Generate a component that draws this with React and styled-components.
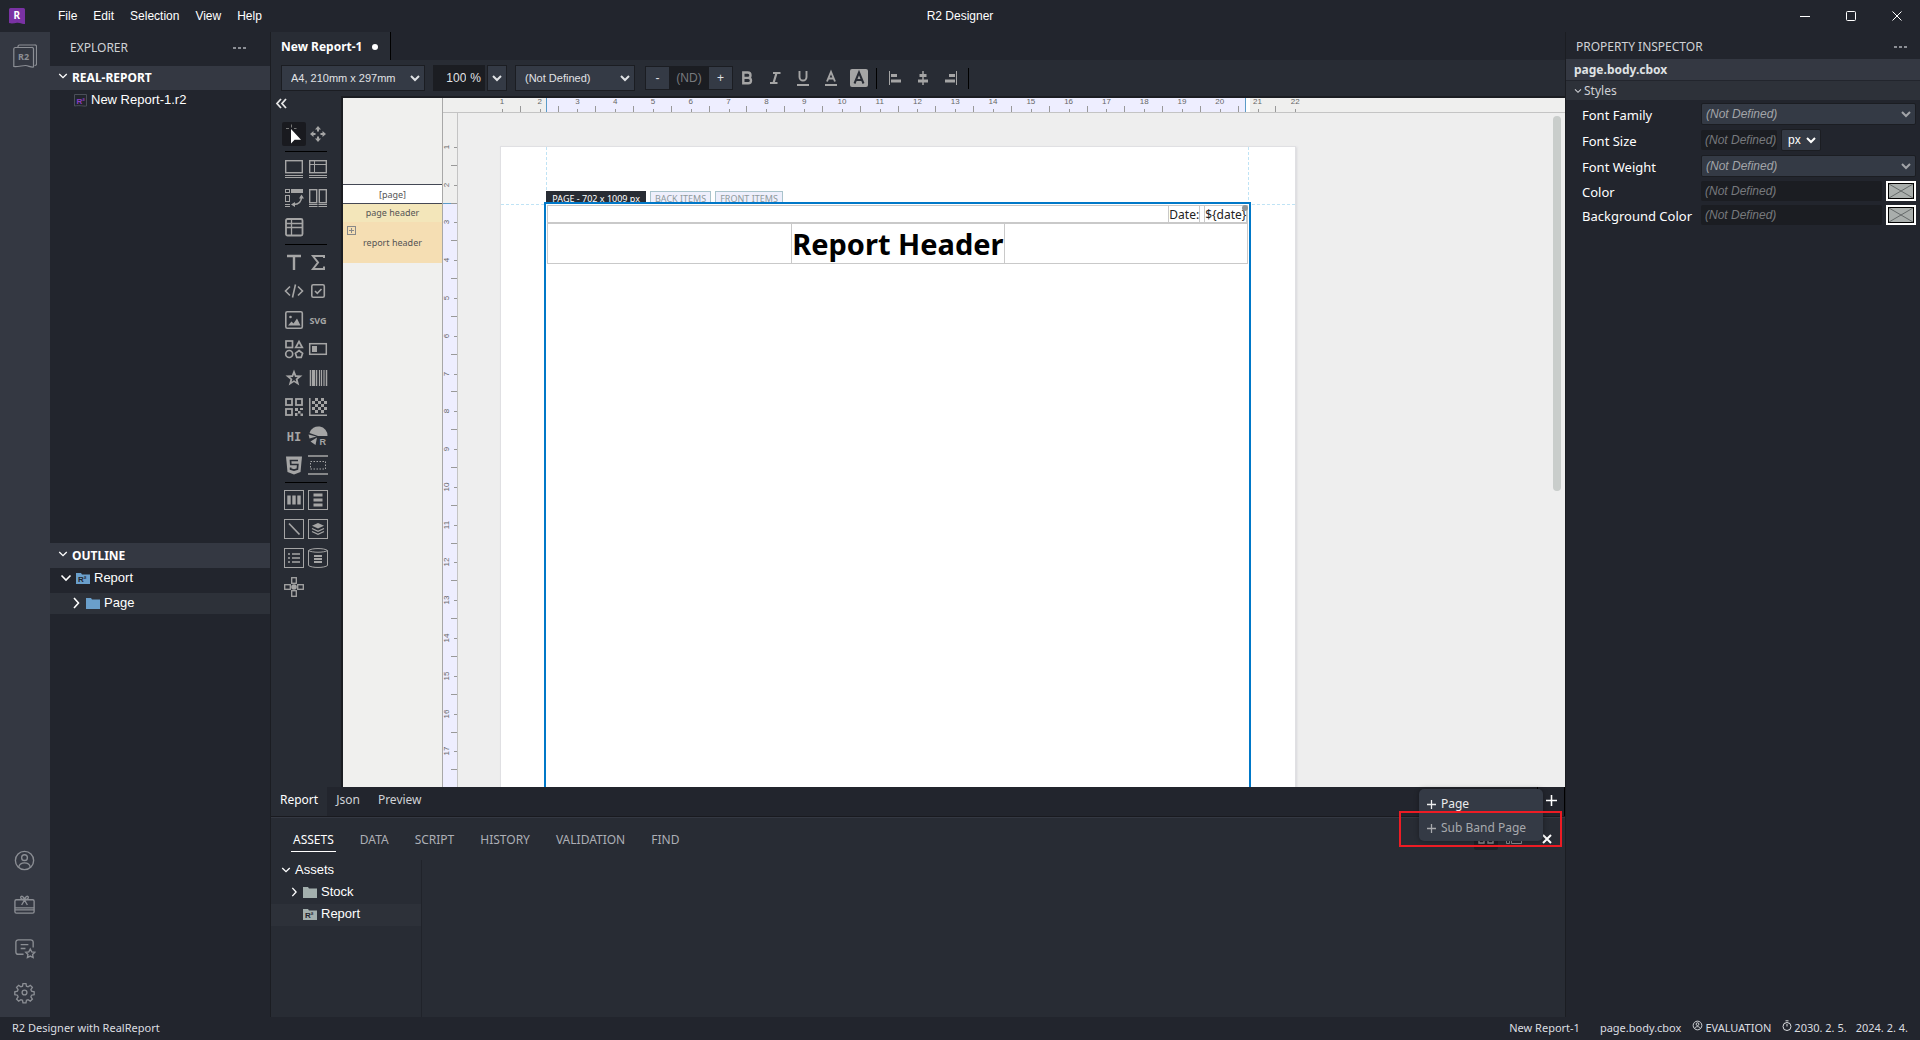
import React from 'react';
import styled, { createGlobalStyle, css } from 'styled-components';

const ui = '"Noto Sans", "Open Sans", sans-serif';
const sans = '"Liberation Sans", Arial, sans-serif';

const c = {
  base: '#22252d',
  panel: '#282c34',
  rail: '#343842',
  field: '#343a45',
  dark: '#1b1d22',
  hover: '#2d3139',
  icon: '#a5a5a5',
  text: '#ffffff',
  soft: '#d0d2d6',
  line: '#c9c9c9',
  blue: '#0078c8',
};

const GlobalStyle = createGlobalStyle`
  *, *::before, *::after { box-sizing: border-box; }
  body { margin: 0; background: ${c.base}; color: ${c.text}; font: 13px/20px ${sans}; }
  button, input, select { font: inherit; color: inherit; margin: 0; padding: 0; border: 0; background: none; border-radius: 0; }
  h1, h2, h3, p, ul { margin: 0; padding: 0; font: inherit; list-style: none; }
  svg { display: block; flex: none; }
`;

const Shell = styled.div`
  height: 100vh;
  display: flex;
  flex-direction: column;
  overflow: hidden;
`;

const TitleBar = styled.header`
  display: grid;
  grid-template-columns: 1fr auto 1fr;
  align-items: center;
  height: 32px;
  flex: none;
  font-size: 12px;
`;
const TitleLeft = styled.div`
  display: flex;
  align-items: center;
  gap: 33px;
  padding-left: 9px;
`;
const Menu = styled.nav`
  display: flex;
  gap: 16px;
`;
const MenuButton = styled.button`
  height: 20px;
`;
const WindowButtons = styled.div`
  display: flex;
  justify-content: flex-end;
`;
const WindowButton = styled.button`
  width: 46px;
  height: 32px;
  display: grid;
  place-items: center;
`;

const Main = styled.div`
  flex: 1;
  display: flex;
  min-height: 0;
`;

const Rail = styled.nav`
  width: 50px;
  flex: none;
  background: ${c.rail};
  display: flex;
  flex-direction: column;
  align-items: center;
  gap: 20px;
  padding: 12px 0 12px;
  color: #8b8e94;
`;
const RailButton = styled.button`
  width: 24px;
  height: 24px;
  ${(p) => p.$push && css`margin-top: auto;`}
`;

const Explorer = styled.aside`
  width: 220px;
  flex: none;
  display: flex;
  flex-direction: column;
`;
const PanelHeader = styled.div`
  display: flex;
  justify-content: space-between;
  align-items: center;
  height: ${(p) => p.$h}px;
  padding: ${(p) => p.$pad};
  font: 12px/16px ${ui};
  color: ${c.soft};
  flex: none;
`;
const Dots = styled.button`
  display: flex;
  gap: 2px;
  height: 16px;
  align-items: center;
  &::before, &::after, span { content: ''; width: 3px; height: 2px; background: #8b8e94; }
`;
const Section = styled.button`
  display: flex;
  align-items: center;
  gap: 4px;
  height: ${(p) => p.$h || 24}px;
  padding: 0 8px;
  background: ${c.rail};
  font: bold 12px/16px ${ui};
  flex: none;
  svg { margin-bottom: 4px; }
`;
const ExplorerTree = styled.ul`
  flex: 1;
`;
const OutlineTree = styled.ul`
  flex: none;
  height: 449px;
`;
const TreeRow = styled.li`
  display: flex;
  align-items: center;
  gap: 4px;
  height: ${(p) => p.$h || 22}px;
  padding: 0 0 ${(p) => p.$pb || 2}px ${(p) => p.$indent}px;
  background: ${(p) => (p.$on ? c.hover : 'none')};
  font: 13px/18px ${sans};
`;

const Editor = styled.main`
  flex: 1;
  min-width: 0;
  display: flex;
  flex-direction: column;
  border-left: 1px solid #1b1d22;
  background: ${c.panel};
`;
const FileTabs = styled.div`
  height: 28px;
  flex: none;
  background: ${c.base};
  display: flex;
`;
const FileTab = styled.button`
  display: flex;
  align-items: center;
  gap: 10px;
  padding: 2px 12px 0 10px;
  background: ${c.panel};
  border-right: 1px solid #000;
  font: bold 12px/16px ${ui};
  &::after { content: ''; width: 6px; height: 6px; border-radius: 50%; background: #fff; }
`;
const Toolbar = styled.div`
  height: 36px;
  flex: none;
  display: flex;
  align-items: center;
  padding: 0 10px 0;
  font: 11px/14px ${sans};
  color: #e0e2e5;
`;
const SelectBox = styled.div`
  display: grid;
  align-items: center;
  width: ${(p) => (p.$w ? `${p.$w}px` : 'auto')};
  height: ${(p) => p.$h || 26}px;
  margin-right: ${(p) => p.$mr || 0}px;
  background: ${c.field};
  border: 1px solid ${c.dark};
  border-radius: ${(p) => p.$r || 0}px;
  color: ${(p) => p.$color || 'inherit'};
  select, svg { grid-area: 1 / 1; }
  svg { justify-self: end; margin-right: 4px; pointer-events: none; }
`;
const NativeSelect = styled.select`
  appearance: none;
  width: 100%;
  height: 100%;
  padding-left: ${(p) => p.$pl}px;
  font-style: ${(p) => (p.$italic ? 'italic' : 'normal')};
  color: ${(p) => (p.$italic ? '#a2a4a8' : 'inherit')};
  outline: none;
`;
const ZoomField = styled.label`
  display: flex;
  align-items: center;
  justify-content: flex-end;
  gap: 4px;
  width: 52px;
  height: 26px;
  margin-right: 2px;
  padding-right: 4px;
  background: ${c.dark};
  font-size: 12px;
  input { width: 20px; }
`;
const Stepper = styled.div`
  display: flex;
  height: 24px;
  border: 1px solid ${c.dark};
  background: ${c.dark};
  font-size: 12px;
  input { width: 40px; text-align: center; color: #77797d; }
  input::placeholder { color: #77797d; opacity: 1; }
`;
const StepButton = styled.button`
  width: 23px;
  background: ${c.field};
`;
const ToolButton = styled.button`
  width: 20px;
  height: 20px;
  margin: 0 4px;
  color: ${c.icon};
  display: grid;
  place-items: center;
`;
const ToolDivider = styled.span`
  width: 1px;
  height: 21px;
  background: #000;
  margin: 0 4px 0 3px;
`;

const Body = styled.div`
  flex: 1;
  display: flex;
  min-height: 0;
`;
const Palette = styled.div`
  width: 70px;
  flex: none;
  display: flex;
  flex-direction: column;
  padding-left: 11px;
  color: ${c.icon};
`;
const Collapse = styled.button`
  width: 12px;
  height: 14px;
  margin: 0 0 12px -7px;
  color: #e6e6e6;
`;
const PaletteGroup = styled.div`
  display: grid;
  grid-template-columns: 24px 24px;
  row-gap: 5px;
  & + & { position: relative; margin-top: 11px; }
  & + &::before { content: ''; position: absolute; left: 3px; top: -6px; width: 42px; height: 1px; background: #000; }
`;
const PaletteButton = styled.button`
  width: 24px;
  height: 24px;
  border-radius: 2px;
  background: ${(p) => (p.$on ? '#191a1f' : 'none')};
  color: ${(p) => (p.$on ? '#fff' : 'inherit')};
`;

const Design = styled.div`
  flex: 1;
  min-width: 0;
  display: flex;
  border-top: 2px solid #1b1d22;
  border-left: 2px solid #1b1d22;
  background: #f0f0ee;
  color: #555;
`;
const Bands = styled.div`
  width: 100px;
  flex: none;
  padding-top: 86px;
  border-right: 1px solid #a8a8a8;
  font: 9px/14px ${ui};
  text-align: center;
`;
const Band = styled.div`
  position: relative;
  display: grid;
  place-items: center;
  height: ${(p) => p.$h}px;
  background: ${(p) => p.$bg};
  ${(p) => p.$lined && css`border: solid #444854; border-width: 1px 0; padding-top: 2px;`}
`;
const ExpandBand = styled.button`
  position: absolute;
  left: 4px;
  top: 4px;
  width: 9px;
  height: 9px;
`;
const Sheet = styled.div`
  flex: 1;
  min-width: 0;
  display: grid;
  grid-template: 15px minmax(0, 1fr) / 15px minmax(0, 1fr);
`;
const HRuler = styled.div`
  grid-column: 1 / -1;
  display: flex;
  overflow: hidden;
  padding-left: 40px;
  border-bottom: 1px solid #c4c4c4;
  background: linear-gradient(90deg, #efefee 103px, #5b9bc8 103px 104px, #eeeeff 104px 802px, #5b9bc8 802px 803px, #fff 803px 807px, #efefee 807px);
`;
const VRuler = styled.div`
  display: flex;
  flex-direction: column;
  overflow: hidden;
  padding-top: 15px;
  border-right: 1px solid #c4c4c4;
  background: linear-gradient(180deg, #efefee 90px, #5b9bc8 90px 91px, #eeeeff 91px);
`;
const tick = css`
  content: '';
  position: absolute;
  background: #999;
`;
const HMark = styled.span`
  position: relative;
  flex: none;
  width: 1cm;
  text-align: center;
  font: 8px/8px ${sans};
  color: #666;
  &::before { ${tick} left: 50%; bottom: 0; width: 1px; height: 3px; }
  &::after { ${tick} right: 0; bottom: 0; width: 1px; height: 6px; }
  &:last-child::after { display: none; }
`;
const VMark = styled.span`
  position: relative;
  flex: none;
  height: 1cm;
  display: flex;
  align-items: center;
  font: 8px/8px ${sans};
  color: #666;
  span { width: 8px; display: flex; justify-content: center; transform: rotate(-90deg); }
  &::before { ${tick} top: 50%; right: 0; height: 1px; width: 3px; }
  &::after { ${tick} bottom: 0; right: 0; height: 1px; width: 6px; }
`;
const Work = styled.div`
  position: relative;
  overflow: hidden;
  background: #eeeeee;
`;
const Scrollbar = styled.div`
  position: absolute;
  right: 4px;
  top: 3px;
  width: 8px;
  height: 375px;
  border-radius: 4px;
  background: #c9cdcb;
`;
const Paper = styled.div`
  position: relative;
  width: 210mm;
  height: 297mm;
  margin: 34px 0 0 43px;
  padding: 15mm 12mm;
  background: #fff;
  box-shadow: 0 0 0 1px #e0e0e3, 1px 1px 2px 1px #d8d8dc;
`;
const Guide = styled.i`
  position: absolute;
  border: 0 dashed #bfe3f5;
  ${(p) =>
    p.$row
      ? css`left: 0; right: 0; top: 15mm; border-top-width: 1px;`
      : css`top: 0; bottom: 0; ${p.$side}: 12mm; border-left-width: 1px;`}
`;
const PageBody = styled.section`
  position: relative;
  height: 100%;
  padding: 1px;
  outline: 2px solid ${c.blue};
  background: #fff;
`;
const Tags = styled.div`
  position: absolute;
  left: 12mm;
  top: 44px;
  display: flex;
  gap: 4px;
`;
const Tag = styled.span`
  height: 16px;
  padding: 0 ${(p) => (p.$on ? 5 : 4)}px;
  font: 9px/14px ${ui};
  white-space: nowrap;
  border: 1px solid ${(p) => (p.$on ? c.panel : '#a9c3cc')};
  background: ${(p) => (p.$on ? c.panel : '#eeeffc')};
  color: ${(p) => (p.$on ? '#fff' : '#8f9a9c')};
`;
const PageHeaderBand = styled.div`
  position: relative;
  display: flex;
  justify-content: flex-end;
  gap: 4px;
  height: 18px;
  border: 1px solid ${c.line};
  font: 12px/17px ${ui};
  color: #222;
  span { border: solid ${c.line}; border-width: 0 1px; }
`;
const Handle = styled.i`
  position: absolute;
  right: -1px;
  top: -1px;
  width: 6px;
  height: 6px;
  border-radius: 50%;
  background: #8f9496;
`;
const ReportHeaderBand = styled.div`
  display: flex;
  justify-content: center;
  height: 41px;
  border: 1px solid ${c.line};
  h1 { border: solid ${c.line}; border-width: 0 1px; font: bold 29px/40px ${ui}; color: #000; }
`;

const ViewTabs = styled.div`
  position: relative;
  height: 30px;
  flex: none;
  display: flex;
  background: ${c.base};
  border-bottom: 1px solid #191a1f;
  font: 12px/16px ${ui};
`;
const ViewTab = styled.button`
  padding: 0 9px 4px;
  background: ${(p) => (p.$on ? c.panel : 'none')};
  color: ${(p) => (p.$on ? '#fff' : c.soft)};
`;
const AddPage = styled.button`
  margin-left: auto;
  width: 28px;
  display: grid;
  place-items: center;
  padding-bottom: 2px;
  border: solid #000;
  border-width: 0 1px;
`;
const AddMenu = styled.div`
  position: absolute;
  z-index: 2;
  right: 22px;
  top: 2px;
  width: 124px;
  height: 52px;
  padding: 3px 0 0;
  border-radius: 5px;
  background: ${c.field};
  box-shadow: 0 0 5px rgba(0, 0, 0, 0.35);
`;
const AddItem = styled.button`
  display: flex;
  align-items: center;
  gap: 5px;
  width: 100%;
  height: 24px;
  padding-left: 8px;
  color: ${(p) => (p.$dim ? '#a7a9ad' : '#eceded')};
`;
const Highlight = styled.div`
  position: absolute;
  z-index: 3;
  right: 3px;
  top: 24px;
  width: 163px;
  height: 36px;
  border: 2px solid #ed1c24;
`;
const Dock = styled.section`
  height: 200px;
  flex: none;
  display: flex;
  flex-direction: column;
  border-top: 1px solid #343842;
`;
const DockTabs = styled.div`
  display: flex;
  align-items: flex-start;
  height: 42px;
  flex: none;
  padding: 10px 1px 0 20px;
  gap: 22px;
  font: 12px/20px ${ui};
`;
const DockTab = styled.button`
  height: 24px;
  padding: 0 2px;
  border-bottom: 1px solid ${(p) => (p.$on ? '#fff' : 'transparent')};
  color: ${(p) => (p.$on ? '#fff' : '#adafb6')};
`;
const DockTools = styled.div`
  margin-left: auto;
  display: flex;
  align-items: center;
  gap: 8px;
  color: #85888d;
`;
const DockTool = styled.button`
  width: ${(p) => p.$w}px;
  height: 22px;
  display: grid;
  place-items: center;
  border-radius: 2px;
  background: ${(p) => (p.$on ? '#1e2026' : 'none')};
  color: ${(p) => (p.$bright ? '#fff' : 'inherit')};
`;
const AssetTree = styled.ul`
  width: 151px;
  flex: 1;
  border-right: 1px solid #20232a;
`;

const Inspector = styled.aside`
  width: 355px;
  flex: none;
  border-left: 1px solid #1b1d22;
`;
const Target = styled.h2`
  height: 21px;
  padding-left: 8px;
  background: ${c.rail};
  font: bold 12px/21px ${ui};
  color: #dfe1e4;
`;
const StyleSection = styled.button`
  display: flex;
  align-items: center;
  gap: 2px;
  width: 100%;
  height: 20px;
  margin-bottom: 3px;
  padding-left: 8px;
  background: ${c.hover};
  border-top: 1px solid #22252d;
  font: 12px/18px ${ui};
  color: ${c.soft};
`;
const Fields = styled.div`
  display: grid;
  grid-template-columns: 119px minmax(0, 1fr);
  row-gap: 4px;
  padding: 0 4px 0 16px;
  align-items: center;
  font: italic 12px/16px ${sans};
`;
const FieldLabel = styled.label`
  font: 13px/18px ${ui};
  padding-top: 2px;
`;
const FieldLine = styled.div`
  display: flex;
  align-items: center;
  gap: 4px;
  min-height: ${(p) => p.$h}px;
  & > ${SelectBox} { flex: ${(p) => (p.$fill ? 1 : 'none')}; }
`;
const TextField = styled.input`
  width: ${(p) => (p.$w ? `${p.$w}px` : 'auto')};
  flex: ${(p) => (p.$w ? 'none' : 1)};
  min-width: 0;
  height: 20px;
  padding-left: 4px;
  background: ${c.dark};
  border-radius: 2px;
  font-style: italic;
  &::placeholder { color: #77797d; opacity: 1; }
`;
const Swatch = styled.button`
  width: 30px;
  height: 20px;
  border: 2px solid #fff;
`;

const StatusBar = styled.footer`
  height: 23px;
  flex: none;
  display: flex;
  align-items: center;
  padding: 0 12px 2px;
  font: 11px/16px ${ui};
  color: #dcdee1;
`;
const StatusItem = styled.span`
  display: flex;
  gap: 2px;
  margin-left: ${(p) => p.$ml || 0}px;
  white-space: pre;
`;
const Spacer = styled.span`
  flex: 1;
`;

const Ic = ({ w = 24, h = w, vb = `0 0 ${w} ${h}`, children, sw = 1, fill = 'none' }) => (
  <svg width={w} height={h} viewBox={vb} fill={fill} stroke="currentColor" strokeWidth={sw} aria-hidden="true">
    {children}
  </svg>
);

const Chevron = ({ open = true, w = 12, sw = 1.6 }) => (
  <Ic w={w} vb="0 0 12 12" sw={sw}>
    <path d={open ? 'M1.5 3.5 6 8l4.5-4.5' : 'M4 1l4.5 5L4 11'} />
  </Ic>
);
const Caret = () => (
  <Ic w={10} sw={2}><path d="M1 3l4 4 4-4" /></Ic>
);
const Plus = ({ w = 9, sw = 1.4 }) => (
  <Ic w={w} vb="0 0 10 10" sw={sw}><path d="M5 0v10M0 5h10" /></Ic>
);

const Folder = ({ color, mark }) => (
  <svg width="14" height="12" viewBox="0 0 14 12" aria-hidden="true">
    <path d="M0 1h5l1 1.5h8V12H0z" fill={color} />
    {mark && <text x="2" y="10" fontFamily={sans} fontSize="8" fontWeight="bold" fill="#22252d">R²</text>}
  </svg>
);

const Logo = () => (
  <svg width="16" height="16" viewBox="0 0 16 16" aria-hidden="true">
    <path d="M1.5 0h13A1.5 1.5 0 0 1 16 1.500V16c-3 .3-5-1.600-8-1.200S3 16 0 15V1.500A1.500 1.500 0 0 1 1.500 0z" fill="#7a32a4" />
    <text x="4.500" y="11" fontFamily={ui} fontSize="10" fontWeight="bold" fill="#fff">R</text>
  </svg>
);

const icons = {
  select: (
    <>
      <path d="M9 7v14.500l3.600-3.800H19z" fill="currentColor" stroke="none" />
      <path d="M9.500 2.500v3M4 6.500h3M12 6.500h2.500" stroke="#777" />
    </>
  ),
  move: (
    <g fill="currentColor" stroke="none">
      <path d="M12 4l3 3.500H9zM12 20l3-3.500H9zM4 12l3.500-3v6zM20 12l-3.500-3v6z" />
      <path d="M11 7h2v2.500h-2zM11 14.500h2V17h-2zM7 11h2.500v2H7zM14.500 11H17v2h-2.500z" />
    </g>
  ),
  band: <><rect x="3.700" y="3.700" width="16.600" height="12" strokeWidth="1.400" /><path d="M3 18.500h18M3 20.500h18" /></>,
  tableBand: <><rect x="3.700" y="3.700" width="16.600" height="12" strokeWidth="1.400" /><path d="M3 7.500h18M8.500 4v12M3 18.500h18M3 20.500h18" /></>,
  crosstab: (
    <>
      <rect x="3.500" y="3.500" width="4" height="3" /><path d="M9 5h12" strokeWidth="4" />
      <rect x="3.500" y="9.500" width="4" height="6" /><path d="M3 18.500h5M3 20.500h5" />
      <path d="M19.500 10.500c0 5-2 8-8 8" strokeWidth="1.500" /><path d="M17 12.500l2.500-4 2.500 4zM13 16l-4 2.500 4 2.500z" fill="currentColor" stroke="none" />
    </>
  ),
  columns: <><rect x="3.700" y="3.700" width="7" height="13" strokeWidth="1.400" /><rect x="13.300" y="3.700" width="7" height="13" strokeWidth="1.400" /><path d="M3 18.500h8.500M12.500 18.500H21M3 20.500h8.500M12.500 20.500H21" /></>,
  table: <><rect x="4" y="4" width="16.500" height="16.500" rx="1.500" strokeWidth="1.800" /><path d="M4 8.500h16M4 12.500h16M9.500 4v16" strokeWidth="1.300" /></>,
  text: <path d="M5 6h14M12 6v14" strokeWidth="2.400" />,
  sum: <path d="M18 8V6H7l5 6.500L7 19h11v-2.500" strokeWidth="2" />,
  code: <path d="M8 7.500L3.500 12 8 16.500M16 7.500l4.500 4.500-4.500 4.500M13.500 5.500l-3 13" strokeWidth="1.600" />,
  check: <><rect x="5.800" y="5.800" width="12.500" height="12.500" rx="1.500" strokeWidth="1.600" /><path d="M9 12l2.300 2.300L15.500 10" strokeWidth="1.600" /></>,
  image: <><rect x="3.800" y="3.800" width="16.500" height="16.500" rx="1.500" strokeWidth="1.600" /><path d="M6 17.500l3.500-4 2 2 3.500-5 3.500 7z" fill="currentColor" stroke="none" /><circle cx="8.500" cy="9" r="1.300" fill="currentColor" stroke="none" /></>,
  svg: <text x="12" y="15.500" textAnchor="middle" fontFamily={ui} fontSize="9" fontWeight="bold" fill="currentColor" stroke="none">SVG</text>,
  shapes: <g strokeWidth="1.700"><rect x="4" y="4" width="6.500" height="6.500" /><path d="M17 4.500l3.300 6h-6.600z" /><circle cx="7.200" cy="17" r="3.500" /><path d="M17 13.500l3.600 2.700-1.400 4.200h-4.400l-1.400-4.200z" /></g>,
  toggle: <><rect x="3.700" y="6.700" width="16.600" height="10.600" strokeWidth="1.500" /><path d="M6 9h5v6H6z" fill="currentColor" stroke="none" /></>,
  star: (
    <path
      fillRule="evenodd"
      fill="currentColor"
      stroke="none"
      d="M12 3.500l2.200 5.800 6.300.3-4.900 3.900 1.700 6-5.300-3.400-5.300 3.400 1.700-6-4.900-3.900 6.300-.3zM12 8.500l-1 2.600-2.800.2 2.200 1.700-.7 2.700 2.300-1.500 2.300 1.500-.7-2.700 2.200-1.700-2.800-.2z"
    />
  ),
  barcode: <><path d="M4.500 4v16M10.500 4v16M20.500 4v16" strokeWidth="1.500" /><path d="M7.500 4v16" strokeWidth="3" /><path d="M13.500 4v16M15.500 4v16M18 4v16" strokeWidth="1.200" /></>,
  qr: <><g strokeWidth="1.800"><rect x="4" y="4" width="6" height="6" /><rect x="14" y="4" width="6" height="6" /><rect x="4" y="14" width="6" height="6" /></g><path d="M13 13h3v3h-3zM18 13h3v2h-3zM16 16h2.500v2.500H16zM13 18h2.500v3H13zM18.500 18.500H21V21h-2.500z" fill="currentColor" stroke="none" /></>,
  matrix: (
    <>
      <path d="M3.800 3v17.200H21" strokeWidth="1.500" />
      <g fill="currentColor" stroke="none">
        {[0, 1, 2, 3, 4].map((r) => [0, 1, 2, 3, 4].map((k) => ((r + k) % 2 === 0 ? null : <rect key={`${r}${k}`} x={6 + k * 3} y={3 + r * 3} width="3" height="3" />)))}
      </g>
    </>
  ),
  hi: <text x="12" y="16.500" textAnchor="middle" fontFamily='"DejaVu Sans Mono", monospace' fontSize="12" fontWeight="bold" fill="currentColor" stroke="none">HI</text>,
  chart: (
    <g fill="currentColor" stroke="none">
      <path d="M3.500 9A9.200 9.200 0 0 1 21.500 12H12z" /><path d="M2.500 10.500l8 2-7 2zM4.500 17.500l6.500-4-1.500 7.500z" />
      <text x="13.500" y="21" fontFamily={sans} fontSize="9" fontWeight="bold">R</text>
    </g>
  ),
  html: <><path d="M4 3.500h16L18.500 19 12 21.500 5.500 19z" fill="currentColor" stroke="none" /><path d="M16 7.500H8.500l.3 4h7l-.4 4.500-3.400 1-3.400-1v-1.500" stroke="#282c34" strokeWidth="1.700" /></>,
  space: <><path d="M2 3h20M2 21h20" strokeWidth="1.600" /><rect x="4.500" y="8.500" width="15" height="7.500" strokeDasharray="1.500 1.500" /></>,
  hbox: <><rect x="2.500" y="2.500" width="19" height="19" /><path d="M7 7.500v9M12 7.500v9M17 7.500v9" strokeWidth="3.400" /></>,
  vbox: <><rect x="2.500" y="2.500" width="19" height="19" /><path d="M7.500 7h9M7.500 12h9M7.500 17h9" strokeWidth="3" /></>,
  line: <><rect x="2.500" y="2.500" width="19" height="19" /><path d="M7 6.500L17.500 17.500" strokeWidth="1.700" /></>,
  stack: <><rect x="2.500" y="2.500" width="19" height="19" /><path d="M12 6l6 2.800-6 2.800-6-2.800z" fill="currentColor" stroke="none" /><path d="M6 11.500l6 2.800 6-2.800M6 14.500l6 2.800 6-2.800" strokeWidth="1.300" /></>,
  list: <><rect x="2.500" y="2.500" width="19" height="19" /><path d="M6 8h2M10 8h8M6 12h2M10 12h8M6 16h2M10 16h8" strokeWidth="1.600" /></>,
  data: <><path d="M2.500 4.500v15c3 2.600 16 2.600 19 0v-15c-3 2.300-16 2.300-19 0zM2.500 4.500c3-2.600 16-2.600 19 0" /><path d="M8 10h8M8 13h8M8 16h8" strokeWidth="1.800" /></>,
  cross: <g strokeWidth="1.300"><rect x="9.700" y="2.700" width="4.600" height="5.600" /><rect x="9.700" y="15.700" width="4.600" height="5.600" /><rect x="2.700" y="9.700" width="5.600" height="4.600" /><rect x="15.700" y="9.700" width="5.600" height="4.600" /><circle cx="12" cy="12" r="2.800" fill="currentColor" stroke="none" /></g>,
};

const groups = [
  ['select', 'move'],
  ['band', 'tableBand', 'crosstab', 'columns', 'table'],
  ['text', 'sum', 'code', 'check', 'image', 'svg', 'shapes', 'toggle', 'star', 'barcode', 'qr', 'matrix', 'hi', 'chart', 'html', 'space'],
  ['hbox', 'vbox', 'line', 'stack', 'list', 'data', 'cross'],
];

const formatIcons = [
  ['Bold', <path key="b" d="M6.300 4.500h4.500a2.700 2.700 0 0 1 0 5.400H6.300zM6.300 9.900h5a2.700 2.700 0 0 1 0 5.400h-5z" strokeWidth="2.400" />],
  ['Italic', <path key="i" d="M8 5h7.500M5 15h7.500M11.500 5l-3 10" strokeWidth="2.200" />],
  ['Underline', <path key="u" d="M6.500 3v6a3.500 3.500 0 0 0 7 0V3M4 17h12" strokeWidth="1.900" />],
  ['Font color', <path key="a" d="M6 13.500L10 4l4 9.500M7.500 10.500h5M4 17h12" strokeWidth="1.900" />],
  ['Fill color', <g key="f"><rect x="1" y="1" width="18" height="18" rx="2" fill="currentColor" stroke="none" /><path d="M5.500 15.500l4.500-11 4.500 11M7.500 12h5" stroke="#282c34" strokeWidth="2" /></g>],
];
const alignIcons = [
  ['Align left', <g key="l"><path d="M4.500 3v14" /><path d="M6 7.500h6" strokeWidth="3" /><path d="M6 13h10" strokeWidth="3" /></g>],
  ['Align center', <g key="c"><path d="M10 3v14" strokeWidth="1.500" /><path d="M6.500 7.500h7" strokeWidth="3" /><path d="M5 13h10" strokeWidth="3" /></g>],
  ['Align right', <g key="r"><path d="M15.500 3v14" /><path d="M8 7.500h6" strokeWidth="3" /><path d="M4 13h10" strokeWidth="3" /></g>],
];

const userIcon = (
  <><circle cx="12" cy="12" r="9.500" /><circle cx="12" cy="9" r="3" /><path d="M6 19c.5-3 2.500-4.500 6-4.500s5.500 1.500 6 4.500" /></>
);
const railIcons = [
  ['Account', userIcon],
  ['Gift', <g key="g"><rect x="2" y="7" width="20" height="14" rx="1.500" /><path d="M2 15.500h20M2 17.500h20M12 7.500l-3 5M12 7.500l3 5M12 7c-2 0-4-1-4-2.500S11 2.500 12 7zM12 7c2 0 4-1 4-2.500S13 2.500 12 7z" /></g>],
  ['Feedback', <g key="f"><path d="M11 18H5.500A2.500 2.500 0 0 1 3 15.500v-10A2.500 2.500 0 0 1 5.500 3h13A2.500 2.500 0 0 1 21 5.500V11M8 8h8M8 12h5" /><path d="M18 12.500l1.500 3 3.200.4-2.300 2.300.6 3.200-3-1.500-3 1.500.6-3.200-2.300-2.300 3.200-.4z" /></g>],
  ['Settings', <g key="s"><circle cx="12" cy="12" r="2.500" /><path d="M10.400 2.500h3.200l.5 2.800 1.700.7 2.400-1.600 2.200 2.200-1.600 2.400.7 1.700 2.800.5v3.200l-2.800.5-.7 1.700 1.600 2.400-2.200 2.200-2.400-1.600-1.700.7-.5 2.800h-3.200l-.5-2.800-1.700-.7-2.400 1.600-2.200-2.200 1.600-2.400-.7-1.700-2.800-.5v-3.200l2.800-.5.7-1.700-1.600-2.400 2.200-2.200L8.200 6l1.700-.7z" transform="translate(.2 .2) scale(.98)" /></g>],
];

function Select({ label, value, id, pl = 9, italic, ...box }) {
  return (
    <SelectBox {...box}>
      <NativeSelect id={id} aria-label={label} $pl={pl} $italic={italic} defaultValue={value}>
        <option>{value}</option>
      </NativeSelect>
      <Caret />
    </SelectBox>
  );
}

const range = (n) => Array.from({ length: n }, (_, i) => i + 1);

function Canvas() {
  return (
    <Design>
      <Bands>
        <Band $h={20} $bg="#fff" $lined>[page]</Band>
        <Band $h={18} $bg="#f3e6ba">page header</Band>
        <Band $h={41} $bg="#f5deb3">
          <ExpandBand aria-label="Expand report header">
            <Ic w={9}><rect x=".5" y=".5" width="8" height="8" stroke="#888" /><path d="M4.500 2v5M2 4.500h5" stroke="#888" /></Ic>
          </ExpandBand>
          report header
        </Band>
      </Bands>
      <Sheet>
        <HRuler>{range(22).map((n) => <HMark key={n}>{n}</HMark>)}</HRuler>
        <VRuler>{range(17).map((n) => <VMark key={n}><span>{n}</span></VMark>)}</VRuler>
        <Work>
          <Paper>
            <Guide $row />
            <Guide $side="left" />
            <Guide $side="right" />
            <Tags>
              <Tag $on>PAGE - 702 x 1009 px</Tag>
              <Tag>BACK ITEMS</Tag>
              <Tag>FRONT ITEMS</Tag>
            </Tags>
            <PageBody>
              <PageHeaderBand>
                <span>Date:</span>
                <span>{'${date}'}</span>
                <Handle />
              </PageHeaderBand>
              <ReportHeaderBand><h1>Report Header</h1></ReportHeaderBand>
            </PageBody>
          </Paper>
          <Scrollbar />
        </Work>
      </Sheet>
    </Design>
  );
}

export default function App() {
  return (
    <Shell>
      <GlobalStyle />
      <TitleBar>
        <TitleLeft>
          <Logo />
          <Menu>
            {['File', 'Edit', 'Selection', 'View', 'Help'].map((m) => <MenuButton key={m}>{m}</MenuButton>)}
          </Menu>
        </TitleLeft>
        <h1>R2 Designer</h1>
        <WindowButtons>
          <WindowButton aria-label="Minimize"><Ic w={10}><path d="M0 5.500h10" /></Ic></WindowButton>
          <WindowButton aria-label="Maximize"><Ic w={10}><rect x=".5" y=".5" width="9" height="9" rx="1" /></Ic></WindowButton>
          <WindowButton aria-label="Close"><Ic w={10}><path d="M.5.5l9 9M9.500.5l-9 9" /></Ic></WindowButton>
        </WindowButtons>
      </TitleBar>

      <Main>
        <Rail>
          <RailButton aria-label="Reports">
            <Ic sw={1.2}>
              <path d="M5 3V2.500A1.500 1.500 0 0 1 6.500 1h15A1.500 1.500 0 0 1 23.500 2.500V20c0 1-1 1.500-2 1.500" />
              <path d="M2.500 3.500h16A1.500 1.500 0 0 1 20.500 5v18c-3 .5-5-1.500-8-1.500S4.500 23 .8 22.500V5a1.500 1.500 0 0 1 1.700-1.500z" />
              <text x="5" y="16" fontFamily={ui} fontSize="9" fontWeight="bold" fill="currentColor" stroke="none">R2</text>
            </Ic>
          </RailButton>
          {railIcons.map(([name, icon], i) => (
            <RailButton key={name} aria-label={name} $push={i === 0}>
              <Ic vb="0 0 25 25" sw={1.4}>{icon}</Ic>
            </RailButton>
          ))}
        </Rail>

        <Explorer>
          <PanelHeader $h={34} $pad="0 24px 3px 20px">
            <h2>EXPLORER</h2>
            <Dots aria-label="More"><span /></Dots>
          </PanelHeader>
          <Section><Chevron w={10} />REAL-REPORT</Section>
          <ExplorerTree>
            <TreeRow $indent={24}>
              <svg width="13" height="13" viewBox="0 0 13 13" aria-hidden="true">
                <path d="M.5.5h12v11.500c-4 .5-5-1-12 0z" fill="none" stroke="#4b4f59" />
                <text x="2.500" y="9.500" fontFamily={sans} fontSize="8" fontWeight="bold" fill="#8a3fc0">R²</text>
              </svg>
              New Report-1.r2
            </TreeRow>
          </ExplorerTree>
          <Section $h={25}><Chevron w={10} />OUTLINE</Section>
          <OutlineTree>
            <TreeRow $indent={10} $h={25} $pb={5}><Chevron /><Folder color="#6a9fcb" mark />Report</TreeRow>
            <TreeRow $indent={20} $h={21} $on><Chevron open={false} /><Folder color="#6a9fcb" />Page</TreeRow>
          </OutlineTree>
        </Explorer>

        <Editor>
          <FileTabs><FileTab>New Report-1</FileTab></FileTabs>
          <Toolbar>
            <Select label="Paper size" value="A4, 210mm x 297mm" $w={144} $mr={8} />
            <ZoomField><input aria-label="Zoom" defaultValue="100" />%</ZoomField>
            <Select label="Zoom presets" value="" $w={20} $mr={8} />
            <Select label="Font" value="(Not Defined)" $w={120} $mr={10} />
            <Stepper>
              <StepButton aria-label="Smaller">-</StepButton>
              <input aria-label="Font size" placeholder="(ND)" />
              <StepButton aria-label="Larger">+</StepButton>
            </Stepper>
            {formatIcons.map(([name, icon]) => <ToolButton key={name} aria-label={name}><Ic w={20}>{icon}</Ic></ToolButton>)}
            <ToolDivider />
            {alignIcons.map(([name, icon]) => <ToolButton key={name} aria-label={name}><Ic w={20}>{icon}</Ic></ToolButton>)}
            <ToolDivider />
          </Toolbar>
          <Body>
            <Palette>
              <Collapse aria-label="Collapse palette"><Ic w={12} h={14} sw={1.8}><path d="M6 3L2 7.500 6 12M11 3L7 7.500 11 12" /></Ic></Collapse>
              {groups.map((g) => (
                <PaletteGroup key={g[0]}>
                  {g.map((n) => <PaletteButton key={n} aria-label={n} $on={n === 'select'}><Ic>{icons[n]}</Ic></PaletteButton>)}
                </PaletteGroup>
              ))}
            </Palette>
            <Canvas />
          </Body>
          <ViewTabs>
            <ViewTab $on>Report</ViewTab>
            <ViewTab>Json</ViewTab>
            <ViewTab>Preview</ViewTab>
            <AddPage aria-label="Add page"><Plus w={11} /></AddPage>
            <AddMenu>
              <AddItem><Plus />Page</AddItem>
              <AddItem $dim><Plus />Sub Band Page</AddItem>
            </AddMenu>
            <Highlight />
          </ViewTabs>
          <Dock>
            <DockTabs>
              {['ASSETS', 'DATA', 'SCRIPT', 'HISTORY', 'VALIDATION', 'FIND'].map((t, i) => <DockTab key={t} $on={i === 0}>{t}</DockTab>)}
              <DockTools>
                <DockTool $w={24} $on aria-label="Grid view"><Ic w={16} sw={1.4}><path d="M1 1h5v11H1zM10 1h5v11h-5z" /></Ic></DockTool>
                <DockTool $w={16} aria-label="List view"><Ic w={16}><path d="M.5 8.500h3v4h-3zM5.500 8.500h10v4h-10z" /></Ic></DockTool>
                <DockTool $w={34} $bright aria-label="Close panel"><Ic w={10} sw={2}><path d="M1 1l8 8M9 1L1 9" /></Ic></DockTool>
              </DockTools>
            </DockTabs>
            <AssetTree>
              <TreeRow $indent={10}><Chevron w={10} />Assets</TreeRow>
              <TreeRow $indent={18}><Chevron w={10} open={false} /><Folder color="#a3afad" />Stock</TreeRow>
              <TreeRow $indent={32} $on><Folder color="#a3afad" mark />Report</TreeRow>
            </AssetTree>
          </Dock>
        </Editor>

        <Inspector>
          <PanelHeader $h={27} $pad="2px 13px 0 10px">
            <h2>PROPERTY INSPECTOR</h2>
            <Dots aria-label="More"><span /></Dots>
          </PanelHeader>
          <Target>page.body.cbox</Target>
          <StyleSection><Chevron w={8} />Styles</StyleSection>
          <Fields>
            <FieldLabel htmlFor="family">Font Family</FieldLabel>
            <FieldLine $h={22} $fill><Select id="family" value="(Not Defined)" italic pl={4} $h={22} $r={2} $color="#a2a4a8" /></FieldLine>
            <FieldLabel htmlFor="size">Font Size</FieldLabel>
            <FieldLine $h={22}>
              <TextField id="size" $w={76} placeholder="(Not Defined)" />
              <Select label="Font size unit" value="px" pl={6} $w={40} $h={22} $r={2} />
            </FieldLine>
            <FieldLabel htmlFor="weight">Font Weight</FieldLabel>
            <FieldLine $h={22} $fill><Select id="weight" value="(Not Defined)" italic pl={4} $h={22} $r={2} $color="#a2a4a8" /></FieldLine>
            {[['Color', 'color'], ['Background Color', 'background']].map(([name, id]) => (
              <React.Fragment key={id}>
                <FieldLabel htmlFor={id}>{name}</FieldLabel>
                <FieldLine $h={20}>
                  <TextField id={id} placeholder="(Not Defined)" />
                  <Swatch aria-label={`Pick ${name}`}>
                    <Ic w={26} h={16}>
                      <rect x=".5" y=".5" width="25" height="15" fill="#a9aeac" stroke="#000" />
                      <path d="M1 1l24 14M25 1L1 15" stroke="#666b6b" />
                    </Ic>
                  </Swatch>
                </FieldLine>
              </React.Fragment>
            ))}
          </Fields>
        </Inspector>
      </Main>

      <StatusBar>
        <span>R2 Designer with RealReport</span>
        <Spacer />
        <StatusItem>New Report-1</StatusItem>
        <StatusItem $ml={20}>page.body.cbox</StatusItem>
        <StatusItem $ml={11}><Ic w={11} vb="0 0 24 24" sw={2}>{userIcon}</Ic>EVALUATION</StatusItem>
        <StatusItem $ml={11}><Ic w={10} h={12}><circle cx="5" cy="6.500" r="4" /><path d="M5 6.500V4M3.500.8h3" /></Ic>2030. 2. 5.</StatusItem>
        <StatusItem $ml={9}>2024. 2. 4.</StatusItem>
      </StatusBar>
    </Shell>
  );
}
